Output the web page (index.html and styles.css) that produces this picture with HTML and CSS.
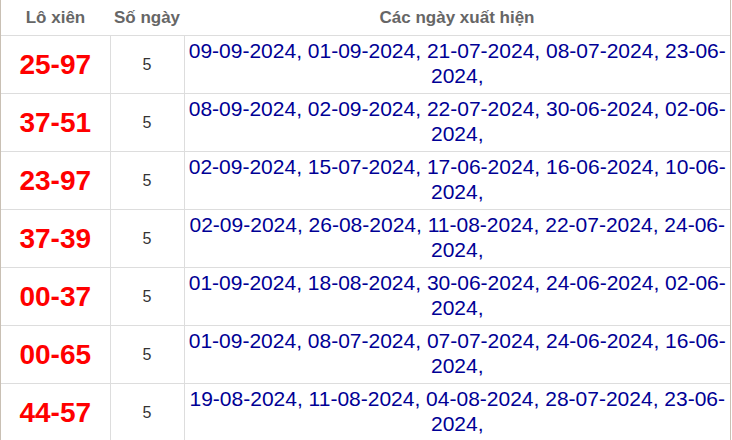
FILE: index.html
```html
<!DOCTYPE html>
<html lang="vi">
<head>
<meta charset="utf-8">
<link rel="stylesheet" href="styles.css">
</head>
<body>
<div class="wrap">
<table class="tbl">
<colgroup><col class="c1"><col class="c2"><col class="c3"></colgroup>
<thead>
<tr><th>Lô xiên</th><th>Số ngày</th><th>Các ngày xuất hiện</th></tr>
</thead>
<tbody>
<tr><td class="pair">25-97</td><td class="cnt">5</td><td class="dates">09-09-2024, 01-09-2024, 21-07-2024, 08-07-2024, 23-06-<br>2024,</td></tr>
<tr><td class="pair">37-51</td><td class="cnt">5</td><td class="dates">08-09-2024, 02-09-2024, 22-07-2024, 30-06-2024, 02-06-<br>2024,</td></tr>
<tr><td class="pair">23-97</td><td class="cnt">5</td><td class="dates">02-09-2024, 15-07-2024, 17-06-2024, 16-06-2024, 10-06-<br>2024,</td></tr>
<tr><td class="pair">37-39</td><td class="cnt">5</td><td class="dates">02-09-2024, 26-08-2024, 11-08-2024, 22-07-2024, 24-06-<br>2024,</td></tr>
<tr><td class="pair">00-37</td><td class="cnt">5</td><td class="dates">01-09-2024, 18-08-2024, 30-06-2024, 24-06-2024, 02-06-<br>2024,</td></tr>
<tr><td class="pair">00-65</td><td class="cnt">5</td><td class="dates">01-09-2024, 08-07-2024, 07-07-2024, 24-06-2024, 16-06-<br>2024,</td></tr>
<tr><td class="pair">44-57</td><td class="cnt">5</td><td class="dates">19-08-2024, 11-08-2024, 04-08-2024, 28-07-2024, 23-06-<br>2024,</td></tr>
</tbody>
</table>
</div>
</body>
</html>
```
FILE: styles.css
```css
html, body {
  margin: 0;
  padding: 0;
  background: #fff;
}
body {
  font-family: "Liberation Sans", Arial, sans-serif;
  overflow: hidden;
}
.wrap {
  width: 729px;
  border-left: 1px solid #c9c0b4;
  border-right: 1px solid #c9c0b4;
  height: 440px;
}
.tbl {
  width: 729px;
  border-collapse: collapse;
  table-layout: fixed;
}
.c1 { width: 109px; }
.c2 { width: 74px; }
.c3 { width: 546px; }
.tbl th {
  height: 35px;
  padding: 0;
  font-size: 17px;
  font-weight: bold;
  color: #666;
  text-align: center;
  vertical-align: middle;
  border-bottom: 1px solid #ddd;
}
.tbl td {
  height: 55px;
  padding: 0;
  text-align: center;
  border-bottom: 1px solid #ddd;
  border-right: 1px solid #ddd;
}
.tbl td.dates {
  border-right: none;
  padding-top: 2px;
}
.pair {
  font-size: 28px;
  font-weight: bold;
  color: #f00;
  vertical-align: middle;
}
.cnt {
  font-size: 16px;
  color: #333;
  vertical-align: middle;
}
.dates {
  font-size: 21px;
  line-height: 25px;
  color: #000095;
  vertical-align: top;
  white-space: nowrap;
}
```
